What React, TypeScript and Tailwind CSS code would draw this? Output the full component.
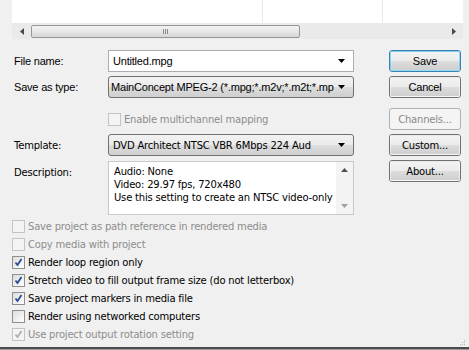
import React from 'react';

const ui = { fontFamily: '"Liberation Sans", Arial, sans-serif', letterSpacing: '-0.2px' };
const tah = { fontFamily: '"DejaVu Sans", Verdana, sans-serif', letterSpacing: '-0.2px' };

function Arrow({ className = '' }: { className?: string }) {
    return (
        <svg width="7" height="4" viewBox="0 0 7 4" className={className}>
            <path d="M0 0H7L3.5 4Z" fill="#000" />
        </svg>
    );
}

function Button({ label, primary, disabled }: { label: string; primary?: boolean; disabled?: boolean }) {
    if (disabled) {
        return (
            <div style={tah} className="w-[72px] h-[22px] rounded-[3px] border border-[#adb2b5] bg-[#f4f4f4] flex items-center justify-center text-[10px] text-[#8a8a8a]">
                {label}
            </div>
        );
    }
    return (
        <div className={`w-[72px] h-[22px] rounded-[3px] border ${primary ? 'border-[#3c7fb1]' : 'border-[#707070]'}`}>
            <div className={`w-full h-full rounded-[2px] border ${primary ? 'border-[#48d2f8]/60' : 'border-[#fcfcfc]/60'} bg-[linear-gradient(#f2f2f2_0%,#ebebeb_50%,#dddddd_50%,#cfcfcf_100%)] flex items-center justify-center text-black ${primary || label === 'Cancel' ? 'text-[11px]' : 'text-[10px]'}`} style={primary || label === 'Cancel' ? ui : tah}>
                {label}
            </div>
        </div>
    );
}

function Check({ checked, disabled, label }: { checked?: boolean; disabled?: boolean; label: string }) {
    return (
        <div className="h-[18px] flex items-center pl-[12px]">
            <div className={`w-[13px] h-[13px] border ${disabled ? 'border-[#c4c4c4] bg-[#f4f4f4]' : 'border-[#8e8f8f] bg-[linear-gradient(135deg,#dcdcdc,#ffffff)]'} flex items-center justify-center`}>
                {checked && (
                    <svg width="9" height="9" viewBox="0 0 9 9">
                        <path d="M1.5 4.5L3.5 7L7.5 1" fill="none" stroke={disabled ? '#b0b0b0' : '#2a4a9a'} strokeWidth="1.8" />
                    </svg>
                )}
            </div>
            <span style={tah} className={`ml-[3px] text-[10px] ${disabled ? 'text-[#8d8d8d]' : 'text-black'}`}>{label}</span>
        </div>
    );
}

export default function App() {
    return (
        <div className="w-[469px] h-[350px] bg-[#f0f0f0] overflow-hidden relative flex flex-col">
            {/* list view */}
            <div className="ml-[12px] w-[451px] h-[23px] bg-white flex">
                <div className="w-[251px] border-r border-[#e8e8e8]" />
                <div className="w-[120px] border-r border-[#e8e8e8]" />
                <div className="flex-1" />
            </div>
            <div className="ml-[12px] w-[451px] h-[16px] bg-[#eaeaea] flex items-center">
                <div className="w-[19px] flex justify-center">
                    <svg width="4" height="7" viewBox="0 0 4 7"><path d="M4 0V7L0 3.5Z" fill="#4a4a4a" /></svg>
                </div>
                <div className="w-[269px] h-[13px] rounded-[2px] border border-[#979797] bg-[linear-gradient(#f3f3f3,#e6e6e6_50%,#d6d6d6)] flex items-center justify-center">
                    <div className="flex gap-[1px]">
                        <div className="w-[1px] h-[5px] bg-[#8a8a8a]" />
                        <div className="w-[1px] h-[5px] bg-[#8a8a8a]" />
                        <div className="w-[1px] h-[5px] bg-[#8a8a8a]" />
                    </div>
                </div>
                <div className="flex-1" />
                <div className="w-[19px] flex justify-center">
                    <svg width="4" height="7" viewBox="0 0 4 7"><path d="M0 0V7L4 3.5Z" fill="#4a4a4a" /></svg>
                </div>
            </div>

            {/* form */}
            <div className="mt-[11px] flex flex-col">
                <div className="flex items-center h-[22px]">
                    <div style={ui} className="w-[108px] pl-[14px] text-[11px]">File name:</div>
                    <div className="w-[246px] h-[22px] bg-white border border-[#abadb3] flex items-center pl-[4px] pr-[8px]">
                        <span style={ui} className="flex-1 text-[11px]">Untitled.mpg</span>
                        <Arrow />
                    </div>
                    <div className="ml-[35px]"><Button label="Save" primary /></div>
                </div>
                <div className="flex items-center h-[22px] mt-[4px]">
                    <div style={ui} className="w-[108px] pl-[14px] text-[11px]">Save as type:</div>
                    <div className="w-[246px] h-[22px] rounded-[3px] border border-[#707070] bg-[linear-gradient(#f2f2f2_0%,#ebebeb_50%,#dddddd_50%,#cfcfcf_100%)] flex items-center pl-[2px] pr-[8px]">
                        <span style={ui} className="flex-1 min-w-0 text-[11px] whitespace-nowrap overflow-hidden">MainConcept MPEG-2 (*.mpg;*.m2v;*.m2t;*.mpa</span>
                        <Arrow className="ml-[4px] shrink-0" />
                    </div>
                    <div className="ml-[35px]"><Button label="Cancel" /></div>
                </div>
                <div className="flex items-center h-[22px] mt-[10px]">
                    <div className="w-[108px]" />
                    <div className="w-[246px] flex items-center">
                        <div className="w-[13px] h-[13px] border border-[#c4c4c4] bg-[#f4f4f4]" />
                        <span style={tah} className="ml-[3px] text-[10px] text-[#8d8d8d]">Enable multichannel mapping</span>
                    </div>
                    <div className="ml-[35px]"><Button label="Channels..." disabled /></div>
                </div>
                <div className="flex items-center h-[22px] mt-[4px]">
                    <div style={tah} className="w-[108px] pl-[14px] text-[10px]">Template:</div>
                    <div className="w-[246px] h-[22px] rounded-[3px] border border-[#707070] bg-[linear-gradient(#f2f2f2_0%,#ebebeb_50%,#dddddd_50%,#cfcfcf_100%)] flex items-center pl-[4px] pr-[8px]">
                        <span style={tah} className="flex-1 text-[10px] whitespace-nowrap">DVD Architect NTSC VBR 6Mbps 224 Aud</span>
                        <Arrow />
                    </div>
                    <div className="ml-[35px]"><Button label="Custom..." /></div>
                </div>
                <div className="flex items-start mt-[4px]">
                    <div style={tah} className="w-[108px] pl-[14px] pt-[5px] text-[10px]">Description:</div>
                    <div className="w-[246px] h-[54px] mt-[1px] bg-white border border-[#c7cacf] flex">
                        <div style={tah} className="flex-1 pl-[5px] pt-[3px] text-[10px] leading-[13px] whitespace-nowrap">
                            <div>Audio: None</div>
                            <div>Video: 29.97 fps, 720x480</div>
                            <div>Use this setting to create an NTSC video-only</div>
                        </div>
                        <div className="w-[17px] bg-[#f3f3f3] flex flex-col items-center justify-between py-[6px]">
                            <svg width="7" height="4" viewBox="0 0 7 4"><path d="M0 4H7L3.5 0Z" fill="#505050" /></svg>
                            <svg width="7" height="4" viewBox="0 0 7 4"><path d="M0 0H7L3.5 4Z" fill="#a0a0a0" /></svg>
                        </div>
                    </div>
                    <div className="ml-[35px]"><Button label="About..." /></div>
                </div>
            </div>

            {/* options */}
            <div className="mt-[2px] flex flex-col">
                <Check disabled label="Save project as path reference in rendered media" />
                <Check disabled label="Copy media with project" />
                <Check checked label="Render loop region only" />
                <Check checked label="Stretch video to fill output frame size (do not letterbox)" />
                <Check checked label="Save project markers in media file" />
                <Check label="Render using networked computers" />
                <Check checked disabled label="Use project output rotation setting" />
            </div>

            <div className="flex-1" />
            <div className="h-[2px] bg-[#4d4d4d]" />
            <div className="h-[1px] bg-[#9a9a9a]" />

            {/* size grip */}
            <div className="absolute right-[4px] bottom-[5px] grid grid-cols-3 gap-[1px]">
                <div className="w-[1px] h-[1px]" /><div className="w-[1px] h-[1px]" /><div className="w-[1px] h-[1px] bg-[#b5b5b5]" />
                <div className="w-[1px] h-[1px]" /><div className="w-[1px] h-[1px] bg-[#b5b5b5]" /><div className="w-[1px] h-[1px] bg-[#b5b5b5]" />
                <div className="w-[1px] h-[1px] bg-[#b5b5b5]" /><div className="w-[1px] h-[1px] bg-[#b5b5b5]" /><div className="w-[1px] h-[1px] bg-[#b5b5b5]" />
            </div>
        </div>
    );
}
